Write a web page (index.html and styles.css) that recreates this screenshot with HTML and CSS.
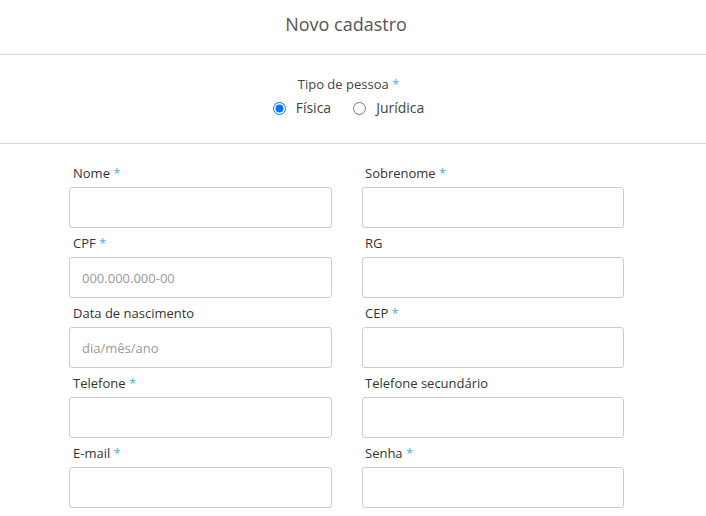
FILE: index.html
```html
<!DOCTYPE html>
<html lang="pt-BR">
<head>
<meta charset="utf-8">
<title>Novo cadastro</title>
<link rel="stylesheet" href="styles.css">
</head>
<body>
<header class="header">
  <h1 class="title">Novo cadastro</h1>
</header>
<section class="type">
  <div class="type-label">Tipo de pessoa <span class="req">*</span></div>
  <div class="type-options">
    <label class="option"><input type="radio" name="tipo" checked> Física</label>
    <label class="option"><input type="radio" name="tipo"> Jurídica</label>
  </div>
</section>
<form class="form">
  <div class="field"><label class="field-label">Nome <span class="req">*</span></label><input class="input" type="text"></div>
  <div class="field"><label class="field-label">Sobrenome <span class="req">*</span></label><input class="input" type="text"></div>
  <div class="field"><label class="field-label">CPF <span class="req">*</span></label><input class="input" type="text" placeholder="000.000.000-00"></div>
  <div class="field"><label class="field-label">RG</label><input class="input" type="text"></div>
  <div class="field"><label class="field-label">Data de nascimento</label><input class="input" type="text" placeholder="dia/mês/ano"></div>
  <div class="field"><label class="field-label">CEP <span class="req">*</span></label><input class="input" type="text"></div>
  <div class="field"><label class="field-label">Telefone <span class="req">*</span></label><input class="input" type="text"></div>
  <div class="field"><label class="field-label">Telefone secundário</label><input class="input" type="text"></div>
  <div class="field"><label class="field-label">E-mail <span class="req">*</span></label><input class="input" type="text"></div>
  <div class="field"><label class="field-label">Senha <span class="req">*</span></label><input class="input" type="password"></div>
</form>
</body>
</html>
```
FILE: styles.css
```css
* { box-sizing: border-box; }
html, body { margin: 0; padding: 0; background: #fff; }
body {
  font-family: "Open Sans", "Noto Sans", sans-serif;
  color: #333;
  overflow: hidden;
}
.header {
  height: 55px;
  border-bottom: 1px solid #d9d9d9;
  padding-right: 14px;
  display: flex;
  align-items: center;
  justify-content: center;
}
.title {
  margin: 0 0 6px;
  font-size: 18px;
  font-weight: 400;
  color: #555;
}
.type {
  height: 89px;
  border-bottom: 1px solid #d9d9d9;
  padding: 20px 9px 0 0;
  display: flex;
  flex-direction: column;
  align-items: center;
}
.type-label {
  font-size: 13px;
  line-height: 18px;
  color: #444;
}
.type-options {
  display: flex;
  gap: 22px;
  margin-top: 5px;
}
.option {
  display: flex;
  align-items: center;
  font-size: 14px;
  line-height: 20px;
  color: #444;
}
.option input {
  margin: 0 10px 0 0;
  width: 13px;
  height: 13px;
}
.req { color: #3db4e8; }
.form {
  width: 555px;
  margin: 0 0 0 69px;
  padding-top: 20px;
  display: grid;
  grid-template-columns: 263px 262px;
  column-gap: 30px;
  row-gap: 6px;
}
.field { display: flex; flex-direction: column; }
.field-label {
  font-size: 13px;
  line-height: 18px;
  color: #333;
  padding-left: 4px;
  margin-bottom: 5px;
}
.field:nth-child(even) .field-label { padding-left: 3px; }
.input {
  height: 41px;
  border: 1px solid #ccc;
  border-radius: 3px;
  padding: 0 12px;
  font-family: inherit;
  font-size: 13px;
  color: #333;
  outline: none;
}
.input::placeholder { color: #999; }
```
